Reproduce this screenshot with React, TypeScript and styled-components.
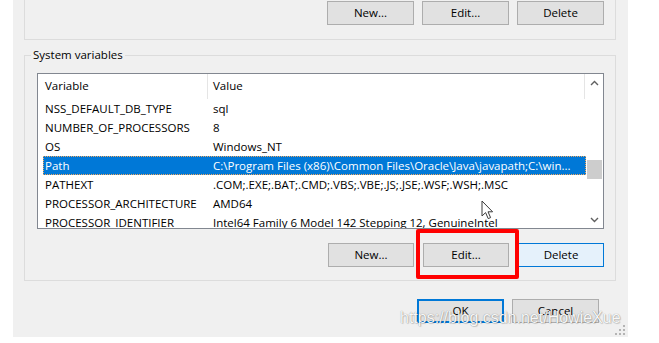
import React from 'react';
import styled, { createGlobalStyle } from 'styled-components';

const GlobalStyle = createGlobalStyle`
    body {
        margin: 0;
        background: #ffffff;
    }
`

interface Variable {
    name: string,
    value: string
}

const variables: Variable[] = [
    { name: 'NSS_DEFAULT_DB_TYPE', value: 'sql' },
    { name: 'NUMBER_OF_PROCESSORS', value: '8' },
    { name: 'OS', value: 'Windows_NT' },
    { name: 'Path', value: 'C:\\Program Files (x86)\\Common Files\\Oracle\\Java\\javapath;C:\\win...' },
    { name: 'PATHEXT', value: '.COM;.EXE;.BAT;.CMD;.VBS;.VBE;.JS;.JSE;.WSF;.WSH;.MSC' },
    { name: 'PROCESSOR_ARCHITECTURE', value: 'AMD64' },
    { name: 'PROCESSOR_IDENTIFIER', value: 'Intel64 Family 6 Model 142 Stepping 12, GenuineIntel' },
]

const Chevron: React.FC<{ up?: boolean }> = ({ up }) => (
    <svg width="9" height="6" viewBox="0 0 9 6">
        <polyline
            points={up ? '1,5 4.5,1.5 8,5' : '1,1 4.5,4.5 8,1'}
            fill="none"
            stroke="#606060"
            strokeWidth="1.4"
        />
    </svg>
)

const App: React.FC = () => {
    return (
        <>
            <GlobalStyle />
            <Dialog>
                <UserGroup>
                    <Button>New...</Button>
                    <Button>Edit...</Button>
                    <Button>Delete</Button>
                </UserGroup>

                <SystemGroup>
                    <Legend>System variables</Legend>
                    <ListView>
                        <ListArea>
                            <Header>
                                <HeaderCell>Variable</HeaderCell>
                                <HeaderCell>Value</HeaderCell>
                            </Header>
                            {variables.map(v => (
                                <Row key={v.name} $selected={v.name === 'Path'}>
                                    <NameCell>{v.name}</NameCell>
                                    <ValueCell>{v.value}</ValueCell>
                                </Row>
                            ))}
                        </ListArea>
                        <ScrollBar>
                            <ArrowBox><Chevron up /></ArrowBox>
                            <Track><Thumb /></Track>
                            <ArrowBox><Chevron /></ArrowBox>
                        </ScrollBar>
                    </ListView>

                    <ButtonRow>
                        <Button $small>New...</Button>
                        <Marked>
                            <Button $small>Edit...</Button>
                            <RedBox />
                        </Marked>
                        <Button $small $hover>Delete</Button>
                    </ButtonRow>
                </SystemGroup>

                <Footer>
                    <Button $default>OK</Button>
                    <Button>Cancel</Button>
                </Footer>

                <Cursor width="13" height="20" viewBox="0 0 13 20">
                    <path d="M1,1 L1,16 L4.6,12.6 L7.2,18.6 L9.6,17.6 L7,11.8 L11.6,11.8 Z"
                        fill="#ffffff" stroke="#3a3a3a" strokeWidth="1" strokeLinejoin="round" />
                </Cursor>

                <Watermark>https://blog.csdn.net/HowieXue</Watermark>

                <Grip width="10" height="10" viewBox="0 0 10 10">
                    <rect x="8" y="0" width="2" height="2" fill="#b4b4b4" />
                    <rect x="4" y="4" width="2" height="2" fill="#b4b4b4" />
                    <rect x="8" y="4" width="2" height="2" fill="#b4b4b4" />
                    <rect x="0" y="8" width="2" height="2" fill="#b4b4b4" />
                    <rect x="4" y="8" width="2" height="2" fill="#b4b4b4" />
                    <rect x="8" y="8" width="2" height="2" fill="#b4b4b4" />
                </Grip>
            </Dialog>
        </>
    )
}

export default App;

const Dialog = styled.div`
    position: relative;
    margin-left: 13px;
    width: 615px;
    height: 337px;
    background: #f0f0f0;
    overflow: hidden;
    display: flex;
    flex-direction: column;
    font-family: "Open Sans", "Noto Sans", sans-serif;
    font-size: 11.5px;
    color: #000;
`

const UserGroup = styled.div`
    box-sizing: border-box;
    margin-left: 11px;
    width: 592px;
    height: 40px;
    padding: 1px 11px 0 0;
    border: 1px solid #dcdcdc;
    border-top: none;
    display: flex;
    justify-content: flex-end;
    align-items: flex-start;
    gap: 8px;
`

const Button = styled.div<{ $small?: boolean, $default?: boolean, $hover?: boolean }>`
    box-sizing: border-box;
    width: ${({ $small }) => $small ? '86px' : '87px'};
    height: 24px;
    display: flex;
    align-items: center;
    justify-content: center;
    background: ${({ $hover }) => $hover ? '#e5f1fb' : '#e1e1e1'};
    border: ${({ $default }) => $default ? '2px' : '1px'} solid ${({ $default, $hover }) => ($default || $hover) ? '#0078d7' : '#adadad'};
    padding-bottom: 1px;
`

const SystemGroup = styled.div`
    box-sizing: border-box;
    margin: 15px 0 0 11px;
    width: 592px;
    padding: 0 11px 13px 12px;
    border: 1px solid #dcdcdc;
`

const Legend = styled.div`
    width: fit-content;
    margin: -9px 0 0 -6px;
    padding: 0 2px;
    line-height: 16px;
    background: #f0f0f0;
`

const ListView = styled.div`
    box-sizing: border-box;
    margin-top: 10px;
    width: 567px;
    height: 156px;
    border: 1px solid #828790;
    background: #ffffff;
    display: flex;
`

const ListArea = styled.div`
    flex: 1;
    min-width: 0;
    overflow: hidden;
`

const Header = styled.div`
    display: grid;
    grid-template-columns: 170px 1fr;
    height: 25px;
    margin-right: 1px;
`

const HeaderCell = styled.div`
    box-sizing: border-box;
    line-height: 24px;
    padding-left: 5px;
    border-right: 1px solid #e5e5e5;

    &:first-child {
        padding-left: 7px;
    }
`

const Row = styled.div<{ $selected?: boolean }>`
    box-sizing: border-box;
    display: grid;
    grid-template-columns: 165px 1fr;
    margin-left: 5px;
    height: 19px;
    line-height: 17px;
    white-space: nowrap;
    background: ${({ $selected }) => $selected ? '#0078d7' : 'transparent'};
    color: ${({ $selected }) => $selected ? '#ffffff' : '#000000'};
    border: 1px dotted ${({ $selected }) => $selected ? '#f0a860' : 'transparent'};
`

const NameCell = styled.div`
    padding-left: 1px;
    overflow: hidden;
`

const ValueCell = styled.div`
    padding-left: 4px;
    overflow: hidden;
`

const ScrollBar = styled.div`
    width: 17px;
    display: flex;
    flex-direction: column;
    background: #ffffff;
`

const ArrowBox = styled.div`
    height: 17px;
    display: flex;
    align-items: center;
    justify-content: center;
`

const Track = styled.div`
    flex: 1;
`

const Thumb = styled.div`
    margin: 69px 1px 0 1px;
    height: 19px;
    background: #cdcdcd;
`

const ButtonRow = styled.div`
    margin-top: 14px;
    display: flex;
    justify-content: flex-end;
    gap: 9px;
`

const Marked = styled.div`
    position: relative;
`

const RedBox = styled.div`
    position: absolute;
    left: -7px;
    top: -14px;
    width: 103px;
    height: 50px;
    box-sizing: border-box;
    border: 4px solid #ff0000;
    border-radius: 2px;
    pointer-events: none;
`

const Footer = styled.div`
    margin-top: 18px;
    padding-right: 29px;
    display: flex;
    justify-content: flex-end;
    gap: 8px;
`

const Cursor = styled.svg`
    position: absolute;
    left: 468px;
    top: 200px;
`

const Watermark = styled.div`
    position: absolute;
    left: 387px;
    top: 309px;
    font-family: "Liberation Sans", Arial, sans-serif;
    font-size: 16px;
    line-height: 18px;
    color: rgba(255, 255, 255, 0.95);
    text-shadow: 0 0 1px rgba(0, 0, 0, 0.45), 1px 1px 1px rgba(0, 0, 0, 0.15);
    white-space: nowrap;
`

const Grip = styled.svg`
    position: absolute;
    right: 3px;
    bottom: 2px;
`
